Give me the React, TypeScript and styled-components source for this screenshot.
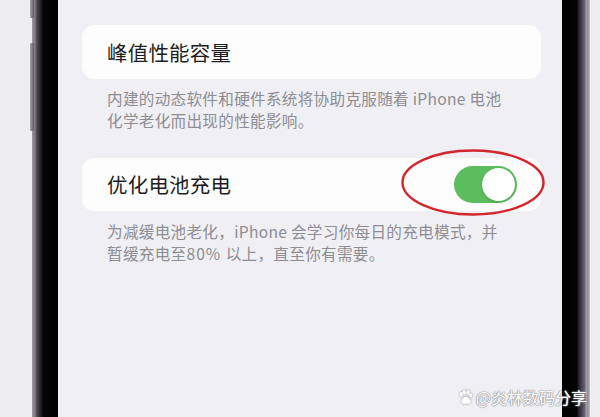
import React from "react";
import styled, { createGlobalStyle } from "styled-components";

const Global = createGlobalStyle`
  html, body { margin: 0; padding: 0; }
  body {
    width: 600px;
    height: 417px;
    overflow: hidden;
    background: #efeff1;
    font-family: "Noto Sans CJK SC", "Noto Sans", sans-serif;
  }
`;

const Page = styled.div`
  display: flex;
  width: 600px;
  height: 417px;
  background: #efeff1;
`;

const OuterMargin = styled.div<{ $w: number }>`
  width: ${(p) => p.$w}px;
  flex: none;
  background: #eeeef0;
`;

const LeftFrame = styled.div`
  position: relative;
  width: 26px;
  flex: none;
  background: linear-gradient(
    to right,
    #9c98a2 0px,
    #7d7884 3px,
    #4a4550 5px,
    #221f25 9px,
    #050505 11px,
    #000 26px
  );
`;

const SideButton = styled.div<{ $top: number; $h: number }>`
  position: absolute;
  left: -2px;
  top: ${(p) => p.$top}px;
  width: 4px;
  height: ${(p) => p.$h}px;
  border-radius: 1px;
  background: linear-gradient(to right, #a7a3ad, #5e5965);
`;

const RightFrame = styled.div`
  width: 28px;
  flex: none;
  background: linear-gradient(
    to right,
    #000 0px,
    #050505 15px,
    #2a2630 17px,
    #4b4652 20px,
    #6b6672 23px,
    #a6a2ac 24px,
    #8f8a96 26px,
    #c8c6cc 28px
  );
`;

const Screen = styled.div`
  position: relative;
  flex: 1;
  background: #efeff4;
  padding: 25px 21px 0 24px;
  display: flex;
  flex-direction: column;
`;

const Card = styled.div<{ $h: number }>`
  position: relative;
  height: ${(p) => p.$h}px;
  background: #fdfdfe;
  border-radius: 12px;
  display: flex;
  align-items: center;
  justify-content: space-between;
  padding: 0 24px 0 25px;
`;

const CardTitle = styled.span`
  font-size: 20.5px;
  color: #1d1d1f;
  letter-spacing: 0.2px;
  line-height: 1;
`;

const Footnote = styled.p<{ $mt: number; $mb: number }>`
  margin: ${(p) => p.$mt}px 0 ${(p) => p.$mb}px 0;
  padding-left: 25px;
  font-size: 15.6px;
  line-height: 22px;
  color: #8d8d92;
  letter-spacing: 0.3px;
`;

const Num = styled.span`
  letter-spacing: 1px;
`;

const Toggle = styled.div`
  width: 63px;
  height: 37px;
  border-radius: 19px;
  background: #5cbd5e;
  position: relative;
  flex: none;
`;

const Knob = styled.div`
  position: absolute;
  right: 2px;
  top: 2px;
  width: 33px;
  height: 33px;
  border-radius: 50%;
  background: #fff;
  box-shadow: 0 1px 3px rgba(0, 0, 0, 0.18);
`;

const Ring = styled.svg`
  position: absolute;
  left: 318px;
  top: -10px;
  width: 146px;
  height: 69px;
  overflow: visible;
`;

const Watermark = styled.div`
  position: absolute;
  right: -25px;
  bottom: 8px;
  display: flex;
  align-items: center;
  gap: 2px;
  font-size: 16px;
  color: #ffffff;
  text-shadow: 0 0 1px #8a8a8a, 0 0 1px #8a8a8a, 0 0 2px #a0a0a0;
  white-space: nowrap;
  z-index: 2;
`;

const Paw = () => (
  <svg width="17" height="17" viewBox="0 0 16 16" style={{ filter: "drop-shadow(0 0 1px #888)" }}>
    <g fill="#fff">
      <ellipse cx="4" cy="5" rx="1.6" ry="2.1" />
      <ellipse cx="7" cy="3" rx="1.6" ry="2.1" />
      <ellipse cx="10.5" cy="3.3" rx="1.6" ry="2.1" />
      <ellipse cx="13" cy="6" rx="1.5" ry="1.9" />
      <path d="M8.5 7.5 C5.5 7.5 3.5 11 4.5 13 C5.5 14.6 7.5 13.6 8.5 13.6 C9.5 13.6 11.8 14.6 12.6 13 C13.5 11 11.5 7.5 8.5 7.5 Z" />
    </g>
  </svg>
);

export default function App() {
  return (
    <>
      <Global />
      <Page>
        <OuterMargin $w={32} />
        <LeftFrame>
          <SideButton $top={-4} $h={22} />
          <SideButton $top={43} $h={88} />
        </LeftFrame>
        <Screen>
          <Card $h={54}>
            <CardTitle>峰值性能容量</CardTitle>
          </Card>
          <Footnote $mt={8} $mb={27}>
            内建的动态软件和硬件系统将协助克服随着 iPhone 电池
            <br />
            化学老化而出现的性能影响。
          </Footnote>
          <Card $h={53}>
            <CardTitle>优化电池充电</CardTitle>
            <Toggle>
              <Knob />
            </Toggle>
            <Ring viewBox="0 0 146 69">
              <ellipse
                cx="73"
                cy="34.5"
                rx="70.5"
                ry="32"
                fill="none"
                stroke="#d3262d"
                strokeWidth="2.4"
              />
            </Ring>
          </Card>
          <Footnote $mt={9} $mb={0}>
            为减缓电池老化，iPhone 会学习你每日的充电模式，并
            <br />
            暂缓充电至<Num>80% </Num>以上，直至你有需要。
          </Footnote>
          <Watermark>
            <Paw />
            <span>@炎林数码分享</span>
          </Watermark>
        </Screen>
        <RightFrame />
        <OuterMargin $w={10} />
      </Page>
    </>
  );
}
